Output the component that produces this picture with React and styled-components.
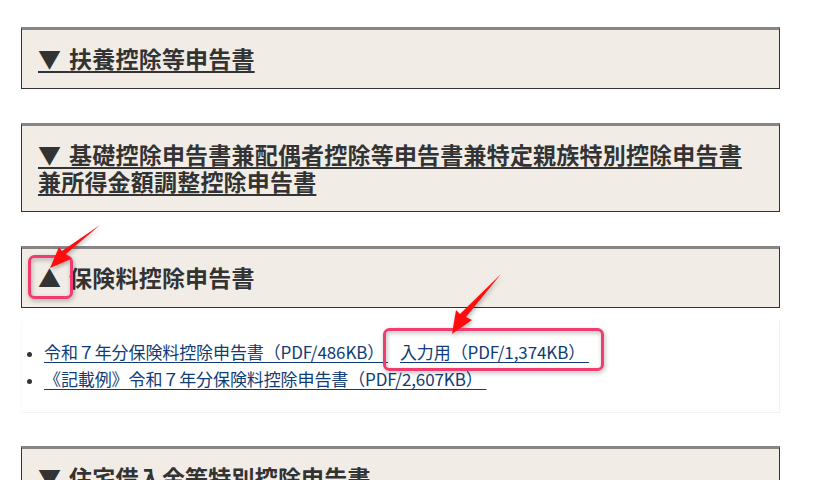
import styled, { createGlobalStyle } from "styled-components";

const GlobalStyle = createGlobalStyle`
  body {
    margin: 0;
    background: #fff;
    font-family: "Noto Sans CJK JP", "Noto Sans", sans-serif;
    color: #333;
  }
`;

const Page = styled.div`
  position: relative;
  width: 831px;
  height: 480px;
  overflow: hidden;
  padding: 27px 0 0 21px;
  box-sizing: border-box;
`;

const Column = styled.div`
  width: 759px;
  display: flex;
  flex-direction: column;
`;

const Section = styled.section`
  margin-bottom: ${({ $open }) => ($open ? "33px" : "34px")};
`;

const Header = styled.div`
  background: #f1ece6;
  border: 1px solid #333;
  border-top: 3px solid #8a8585;
  padding: 15px 17px 16px 16px;
`;

const Title = styled.h3`
  margin: 0;
  font-size: 23px;
  line-height: 27px;
  font-weight: 700;
  color: #333;
  text-decoration: ${({ $open }) => ($open ? "none" : "underline")};
  text-decoration-thickness: 2px;
  text-underline-offset: 3px;
  letter-spacing: 0.2px;
`;

const Panel = styled.div`
  margin-top: 13px;
  border: 1px solid #f2f2f2;
  border-top: none;
  border-left-color: #fafafa;
  background: #fff;
`;

const List = styled.ul`
  margin: 0;
  padding: 17px 0 20px 22px;
  list-style: disc;
`;

const Item = styled.li`
  font-size: 17px;
  line-height: 27px;
  color: #333;
  &::marker {
    font-size: 14px;
  }
`;

const FileLink = styled.a`
  color: #103c74;
  text-decoration: underline;
  text-underline-offset: 3px;
  letter-spacing: -0.1px;
  margin-right: ${({ $gap }) => $gap || 0}px;
`;

const Overlay = styled.svg`
  position: absolute;
  left: 0;
  top: 0;
  pointer-events: none;
`;

const sections = [
  { title: "扶養控除等申告書" },
  { title: "基礎控除申告書兼配偶者控除等申告書兼特定親族特別控除申告書兼所得金額調整控除申告書" },
  { title: "保険料控除申告書", open: true },
  { title: "住宅借入金等特別控除申告書" },
];

function Annotations() {
  return (
    <Overlay width="831" height="480" viewBox="0 0 831 480">
      <defs>
        <filter id="sh" x="-20%" y="-20%" width="140%" height="140%">
          <feDropShadow dx="1" dy="2" stdDeviation="2" floodColor="#000" floodOpacity="0.3" />
        </filter>
      </defs>
      <g filter="url(#sh)">
        <rect x="29.5" y="256.5" width="42" height="41" rx="5" fill="none" stroke="#f23a6e" strokeWidth="3" />
        <rect x="384.5" y="329.5" width="218" height="40" rx="5" fill="none" stroke="#f23a6e" strokeWidth="3" />
        <path d="M100 225 L66 254 L71 259 L50 268 L59 247 L62 251 Z" fill="#ff1010" />
        <path d="M501 274 L466 317 L472 320 L452 334 L456 310 L460 314 Z" fill="#ff1010" />
      </g>
    </Overlay>
  );
}

export default function App() {
  return (
    <Page>
      <GlobalStyle />
      <Column>
        {sections.map((s) => (
          <Section key={s.title} $open={s.open}>
            <Header>
              <Title $open={s.open}>
                {s.open ? "▲\u2004" : "▼\u2004"}
                {s.title}
              </Title>
            </Header>
            {s.open && (
              <Panel>
                <List>
                  <Item>
                    <FileLink $gap={12}>令和７年分保険料控除申告書（PDF/486KB）&nbsp;</FileLink>
                    <FileLink>入力用（PDF/1,374KB）&nbsp;</FileLink>
                  </Item>
                  <Item>
                    <FileLink>《記載例》令和７年分保険料控除申告書（PDF/2,607KB）&nbsp;</FileLink>
                  </Item>
                </List>
              </Panel>
            )}
          </Section>
        ))}
      </Column>
      <Annotations />
    </Page>
  );
}
